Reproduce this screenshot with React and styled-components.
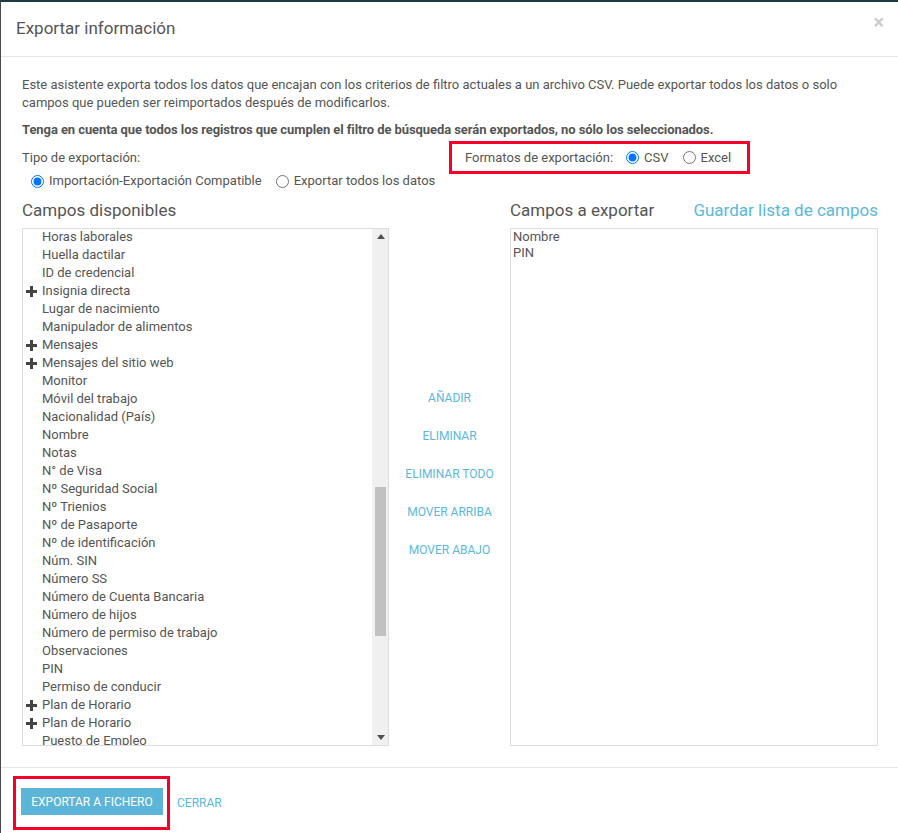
import React from 'react';
import styled, { createGlobalStyle } from 'styled-components';

const available = [
    { label: 'Horas laborales' },
    { label: 'Huella dactilar' },
    { label: 'ID de credencial' },
    { label: 'Insignia directa', group: true },
    { label: 'Lugar de nacimiento' },
    { label: 'Manipulador de alimentos' },
    { label: 'Mensajes', group: true },
    { label: 'Mensajes del sitio web', group: true },
    { label: 'Monitor' },
    { label: 'Móvil del trabajo' },
    { label: 'Nacionalidad (País)' },
    { label: 'Nombre' },
    { label: 'Notas' },
    { label: 'N° de Visa' },
    { label: 'Nº Seguridad Social' },
    { label: 'Nº Trienios' },
    { label: 'Nº de Pasaporte' },
    { label: 'Nº de identificación' },
    { label: 'Núm. SIN' },
    { label: 'Número SS' },
    { label: 'Número de Cuenta Bancaria' },
    { label: 'Número de hijos' },
    { label: 'Número de permiso de trabajo' },
    { label: 'Observaciones' },
    { label: 'PIN' },
    { label: 'Permiso de conducir' },
    { label: 'Plan de Horario', group: true },
    { label: 'Plan de Horario', group: true },
    { label: 'Puesto de Empleo' },
];

const selected = ['Nombre', 'PIN'];
const actions = ['Añadir', 'Eliminar', 'Eliminar todo', 'Mover arriba', 'Mover abajo'];

function Plus() {
    return (
        <svg width="11" height="11" viewBox="0 0 11 11">
            <rect x="0" y="4" width="11" height="3" fill="#444" />
            <rect x="4" y="0" width="3" height="11" fill="#444" />
        </svg>
    );
}

function Arrow({ down }) {
    return (
        <svg width="8" height="5" viewBox="0 0 8 5">
            <polygon points={down ? '0,0 8,0 4,5' : '0,5 8,5 4,0'} fill="#505050" />
        </svg>
    );
}

function App() {
    return (
        <>
            <GlobalStyle />
            <Modal>
                <Header>
                    <Title>Exportar información</Title>
                    <Close>×</Close>
                </Header>
                <Body>
                    <Intro>
                        Este asistente exporta todos los datos que encajan con los criterios de filtro actuales a un archivo CSV. Puede exportar todos los datos o solo campos que pueden ser reimportados después de modificarlos.
                    </Intro>
                    <Notice>Tenga en cuenta que todos los registros que cumplen el filtro de búsqueda serán exportados, no sólo los seleccionados.</Notice>
                    <OptionsRow>
                        <TypeColumn>
                            <span>Tipo de exportación:</span>
                            <RadioGroup $indent={9}>
                                <RadioLabel>
                                    <Radio type="radio" name="tipo" defaultChecked />
                                    Importación-Exportación Compatible
                                </RadioLabel>
                                <RadioLabel>
                                    <Radio type="radio" name="tipo" />
                                    Exportar todos los datos
                                </RadioLabel>
                            </RadioGroup>
                        </TypeColumn>
                        <Highlight>
                            <span>Formatos de exportación:</span>
                            <RadioGroup $indent={0}>
                                <RadioLabel>
                                    <Radio type="radio" name="formato" defaultChecked />
                                    CSV
                                </RadioLabel>
                                <RadioLabel>
                                    <Radio type="radio" name="formato" />
                                    Excel
                                </RadioLabel>
                            </RadioGroup>
                        </Highlight>
                    </OptionsRow>
                    <Columns>
                        <Heading>Campos disponibles</Heading>
                        <span />
                        <HeadingRow>
                            <Heading>Campos a exportar</Heading>
                            <LinkHeading>Guardar lista de campos</LinkHeading>
                        </HeadingRow>
                        <ListBox>
                            <Items>
                                {available.map((item, i) => (
                                    <Item key={i}>
                                        <Toggle>{item.group && <Plus />}</Toggle>
                                        {item.label}
                                    </Item>
                                ))}
                            </Items>
                            <ScrollBar>
                                <ScrollButton><Arrow /></ScrollButton>
                                <Track>
                                    <Thumb />
                                </Track>
                                <ScrollButton><Arrow down /></ScrollButton>
                            </ScrollBar>
                        </ListBox>
                        <Actions>
                            {actions.map((a) => (
                                <ActionLink key={a}>{a}</ActionLink>
                            ))}
                        </Actions>
                        <ListBox>
                            <SelectedItems>
                                {selected.map((s) => (
                                    <div key={s}>{s}</div>
                                ))}
                            </SelectedItems>
                        </ListBox>
                    </Columns>
                </Body>
                <Footer>
                    <FooterHighlight>
                        <PrimaryButton>Exportar a fichero</PrimaryButton>
                    </FooterHighlight>
                    <ActionLink>Cerrar</ActionLink>
                </Footer>
            </Modal>
        </>
    );
}

const GlobalStyle = createGlobalStyle`
    body {
        margin: 0;
        background: #1d3b45;
        font-family: Roboto, 'Liberation Sans', sans-serif;
    }
`;

const Modal = styled.div`
    box-sizing: border-box;
    width: 898px;
    height: 833px;
    background: #fff;
    border-top: 2px solid #1d3b45;
    border-left: 1px solid #4a4a4a;
    display: flex;
    flex-direction: column;
    color: #555;
    font-size: 13px;
`;

const Header = styled.div`
    height: 52px;
    border-bottom: 1px solid #e5e5e5;
    display: flex;
    align-items: center;
    justify-content: space-between;
    padding: 0 14px 2px 15px;
`;

const Title = styled.h4`
    margin: 0;
    font-size: 17px;
    font-weight: 400;
    color: #555;
`;

const Close = styled.span`
    font-size: 20px;
    font-weight: 700;
    color: #ccc;
    margin-top: -12px;
`;

const Body = styled.div`
    padding: 19px 19px 0 21px;
`;

const Intro = styled.p`
    margin: 0;
    line-height: 18px;
`;

const Notice = styled.p`
    margin: 9px 0 0;
    line-height: 18px;
    font-weight: 700;
    letter-spacing: -0.08px;
`;

const OptionsRow = styled.div`
    display: flex;
    align-items: flex-start;
    margin-top: 2px;
`;

const TypeColumn = styled.div`
    width: 427px;
    padding-top: 8px;
    line-height: 18px;
    display: flex;
    flex-direction: column;
    gap: 5px;
`;

const RadioGroup = styled.div`
    display: flex;
    align-items: center;
    gap: 14px;
    padding-left: ${(p) => p.$indent}px;
`;

const RadioLabel = styled.label`
    display: flex;
    align-items: center;
    gap: 5px;
`;

const Radio = styled.input`
    width: 13px;
    height: 13px;
    margin: 0;
`;

const Highlight = styled.div`
    box-sizing: border-box;
    height: 33px;
    width: 301px;
    border: 3px solid #f50026;
    display: flex;
    align-items: center;
    gap: 13px;
    padding-left: 13px;
`;

const Columns = styled.div`
    display: grid;
    grid-template-columns: 367px 121px 368px;
    grid-template-rows: 29px 518px;
    margin-top: 9px;
`;

const Heading = styled.div`
    font-size: 17px;
    color: #555;
    line-height: 22px;
`;

const HeadingRow = styled.div`
    display: flex;
    justify-content: space-between;
`;

const LinkHeading = styled(Heading)`
    color: #5bb8dc;
`;

const ListBox = styled.div`
    box-sizing: border-box;
    border: 1px solid #ddd;
    display: flex;
    overflow: hidden;
`;

const Items = styled.div`
    flex: 1;
    margin-top: -1px;
`;

const Item = styled.div`
    height: 18px;
    line-height: 18px;
    display: flex;
    align-items: center;
    padding-left: 3px;
    white-space: nowrap;
`;

const Toggle = styled.span`
    width: 16px;
    display: flex;
    align-items: center;
`;

const ScrollBar = styled.div`
    width: 15px;
    background: #f0f0f0;
    border-left: 1px solid #f0f0f0;
    display: flex;
    flex-direction: column;
`;

const ScrollButton = styled.div`
    height: 15px;
    display: flex;
    align-items: center;
    justify-content: center;
`;

const Track = styled.div`
    flex: 1;
    padding: 243px 2px 0;
`;

const Thumb = styled.div`
    height: 149px;
    background: #c1c1c1;
`;

const Actions = styled.div`
    display: flex;
    flex-direction: column;
    align-items: center;
    gap: 22px;
    padding-top: 162px;
`;

const ActionLink = styled.span`
    font-size: 12px;
    line-height: 16px;
    text-transform: uppercase;
    color: #5bb8dc;
`;

const SelectedItems = styled.div`
    padding: 0 2px;
    line-height: 16px;
`;

const Footer = styled.div`
    margin-top: 21px;
    border-top: 1px solid #e5e5e5;
    display: flex;
    align-items: center;
    gap: 7px;
    padding: 8px 0 0 12px;
`;

const FooterHighlight = styled.div`
    border: 3px solid #f50026;
    padding: 9px 4px 12px 5px;
`;

const PrimaryButton = styled.button`
    width: 142px;
    height: 27px;
    border: none;
    background: #5bb5d9;
    color: #fff;
    font-family: inherit;
    font-size: 12px;
    text-transform: uppercase;
    padding: 0;
`;

export default App;
